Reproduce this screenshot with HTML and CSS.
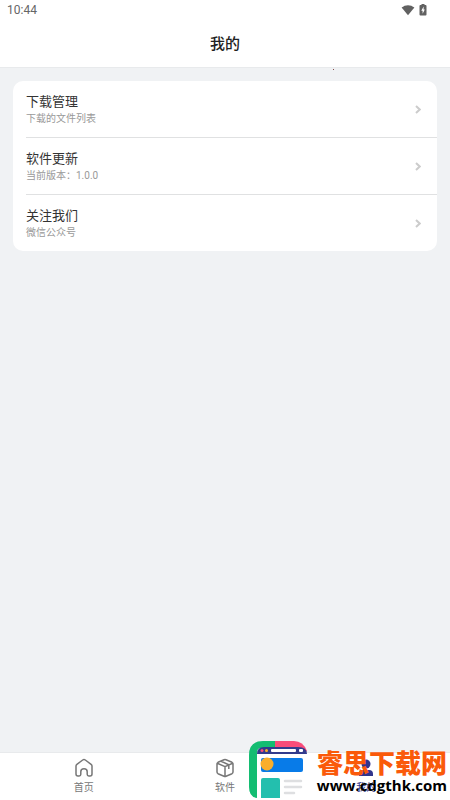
FILE: index.html
```html
<!DOCTYPE html>
<html lang="zh-CN">
<head>
<meta charset="utf-8">
<meta name="viewport" content="width=device-width, initial-scale=1">
<title>我的</title>
<link rel="stylesheet" href="styles.css">
</head>
<body>
<header class="header">
  <div class="status">
    <span class="time">10:44</span>
    <span class="status-icons">
      <svg class="wifi" viewBox="0 0 14 12" aria-hidden="true"><path d="M0.6 3.6C4.2.3 9.8.3 13.4 3.6L7 11.2Z"/></svg>
      <svg class="battery" viewBox="0 0 8 12" aria-hidden="true"><path fill-rule="evenodd" d="M2.5 1V0h3v1H6.6Q7.5 1 7.5 2v8.6q0 1-.9 1H1.4q-.9 0-.9-1V2q0-1 .9-1ZM4.6 2.6 2.3 6.8h1.3v3L5.8 5.6H4.6Z"/></svg>
    </span>
  </div>
  <h1 class="title">我的</h1>
</header>
<main class="content">
  <i class="speck"></i>
  <div class="card">
    <a class="row" href="#">
      <span class="row-text"><span class="name">下载管理</span><span class="note">下载的文件列表</span></span>
      <svg class="chevron" viewBox="0 0 6 9" aria-hidden="true"><path d="M1 1l3.7 3.5L1 8"/></svg>
    </a>
    <a class="row" href="#">
      <span class="row-text"><span class="name">软件更新</span><span class="note">当前版本：1.0.0</span></span>
      <svg class="chevron" viewBox="0 0 6 9" aria-hidden="true"><path d="M1 1l3.7 3.5L1 8"/></svg>
    </a>
    <a class="row" href="#">
      <span class="row-text"><span class="name">关注我们</span><span class="note">微信公众号</span></span>
      <svg class="chevron" viewBox="0 0 6 9" aria-hidden="true"><path d="M1 1l3.7 3.5L1 8"/></svg>
    </a>
  </div>
</main>
<nav class="tabs">
  <a class="tab" href="#">
    <svg class="tab-icon" viewBox="0 0 20 20" aria-hidden="true"><path d="M2 8.1Q2 7 2.9 6.3L8.7 2Q10 1.1 11.3 2l5.8 4.3Q18 7 18 8.1V16q0 2-2 2h-1.2q-1.6 0-1.6-1.7v-2.5q0-3-3.2-3t-3.2 3v2.5Q6.8 18 5.2 18H4q-2 0-2-2Z"/></svg>
    <span>首页</span>
  </a>
  <a class="tab" href="#">
    <svg class="tab-icon" viewBox="0 0 20 20" aria-hidden="true"><path d="M9 1.8q1-.4 2 0l6 2.5q1 .5 1 1.600v8.200q0 1.100-1 1.600l-6 2.500q-1 .4-2 0l-6-2.500q-1-.5-1-1.600V5.900q0-1.100 1-1.600ZM2.300 5.300 10 8.600l7.700-3.300M10 8.600v9.800M6 3.200l7.700 3.500M13.800 7v4"/></svg>
    <span>软件</span>
  </a>
  <a class="tab active" href="#">
    <svg class="tab-icon" viewBox="0 0 20 20" aria-hidden="true"><circle cx="10" cy="6" r="4.5"/><path d="M3 18v-2q0-4 4-4h6q4 0 4 4v2Z"/></svg>
    <span>我的</span>
  </a>
</nav>
<div class="watermark">
  <svg class="mark-logo" viewBox="0 0 60 58" aria-hidden="true">
    <path fill="#fff" d="M8 12H54V57H8Z"/>
    <path fill="#14bd72" d="M0 14Q0 0 14 0H27V7H12Q8 7 8 12V57Q0 56 0 46Z"/>
    <path fill="#f94c79" d="M26 0H45Q54 0 58 10L55 12 26 7Z"/>
    <path fill="#323b8d" d="M8 13Q8 6 15 6H49Q58 6 58 13Z"/>
    <circle cx="13" cy="9.5" r="1.5" fill="#f94c79"/><circle cx="17.5" cy="9.5" r="1.5" fill="#f9ae2b"/>
    <rect x="22" y="8" width="25" height="3" rx="1" fill="#fff"/><rect x="50" y="8" width="4" height="3" rx="1" fill="#fff"/>
    <rect x="12" y="17" width="42" height="14" rx="2" fill="#087be8"/>
    <circle cx="18" cy="23" r="6.5" fill="#f9ae2b"/>
    <path fill="#23bfae" d="M12 57V39q0-2 2-2h15q2 0 2 2v18Z"/>
    <path stroke="#dedfe1" stroke-width="2.5" stroke-linecap="round" d="M36 40H52M36 46H52M36 52H45"/>
  </svg>
  <div class="mark-text"><span class="mark-name">睿思下载网</span><span class="mark-url">www.cdgthk.com</span></div>
</div>
</body>
</html>
```
FILE: styles.css
```css
* { box-sizing: border-box; }

body {
  margin: 0;
  min-height: 100vh;
  display: flex;
  flex-direction: column;
  background: #f0f2f4;
  color: #333;
  font-family: Roboto, "Noto Sans CJK SC", sans-serif;
}

a { color: inherit; text-decoration: none; }

.header {
  background: #fff;
  border-bottom: 1px solid #e8eaec;
}

.status {
  display: flex;
  justify-content: space-between;
  align-items: center;
  height: 20px;
  padding: 0 23px 0 7px;
  color: #666;
  font-size: 12px;
}

.status-icons { display: flex; gap: 4px; fill: #616161; }
.wifi { width: 14px; height: 12px; }
.battery { width: 8px; height: 12px; }

.title {
  margin: 0;
  padding-top: 2px;
  color: #222;
  font-size: 15px;
  font-weight: 500;
  line-height: 45px;
  text-align: center;
}

.content { position: relative; flex: 1; padding: 13px; }

.speck {
  position: absolute;
  top: 1px;
  left: 74%;
  width: 1px;
  height: 1px;
  background: #854a4a;
}

.card {
  padding-left: 13px;
  border-radius: 10px;
  background: #fff;
}

.row {
  display: flex;
  justify-content: space-between;
  align-items: center;
  padding: 11px 16px 10px 0;
}

.row + .row { border-top: 1px solid #e0e1e2; }
.row-text { display: flex; flex-direction: column; }
.name { font-size: 13px; line-height: 19px; }
.note { color: #999; font-size: 10px; line-height: 16px; }

.chevron {
  width: 6px;
  height: 9px;
  fill: none;
  stroke: #ccc;
  stroke-width: 2;
}

.tabs {
  display: flex;
  padding: 5px 13px 2px;
  border-top: 1px solid #e8eaec;
  background: #fff;
}

.tab {
  flex: 1;
  display: flex;
  flex-direction: column;
  align-items: center;
  color: #777;
  font-size: 10px;
  line-height: 20px;
}

.tab-icon {
  width: 20px;
  height: 20px;
  fill: none;
  stroke: currentColor;
  stroke-width: 1.5;
  stroke-linejoin: round;
}

.active { color: #30358c; }
.active .tab-icon { fill: currentColor; stroke: none; }

.watermark {
  position: absolute;
  right: 3px;
  bottom: 1px;
  display: flex;
  gap: 8px;
}

.mark-logo { width: 60px; height: 58px; }

.mark-text {
  display: flex;
  flex-direction: column;
  align-items: center;
  padding-top: 6px;
  white-space: nowrap;
}

.mark-name {
  color: #fa5a0a;
  font-family: "Noto Sans CJK SC", sans-serif;
  font-size: 26px;
  font-weight: 900;
  line-height: 29px;
}

.mark-url {
  color: #000;
  font-family: "Open Sans", "Noto Sans", sans-serif;
  font-size: 15px;
  font-weight: 700;
  line-height: 18px;
}
```
